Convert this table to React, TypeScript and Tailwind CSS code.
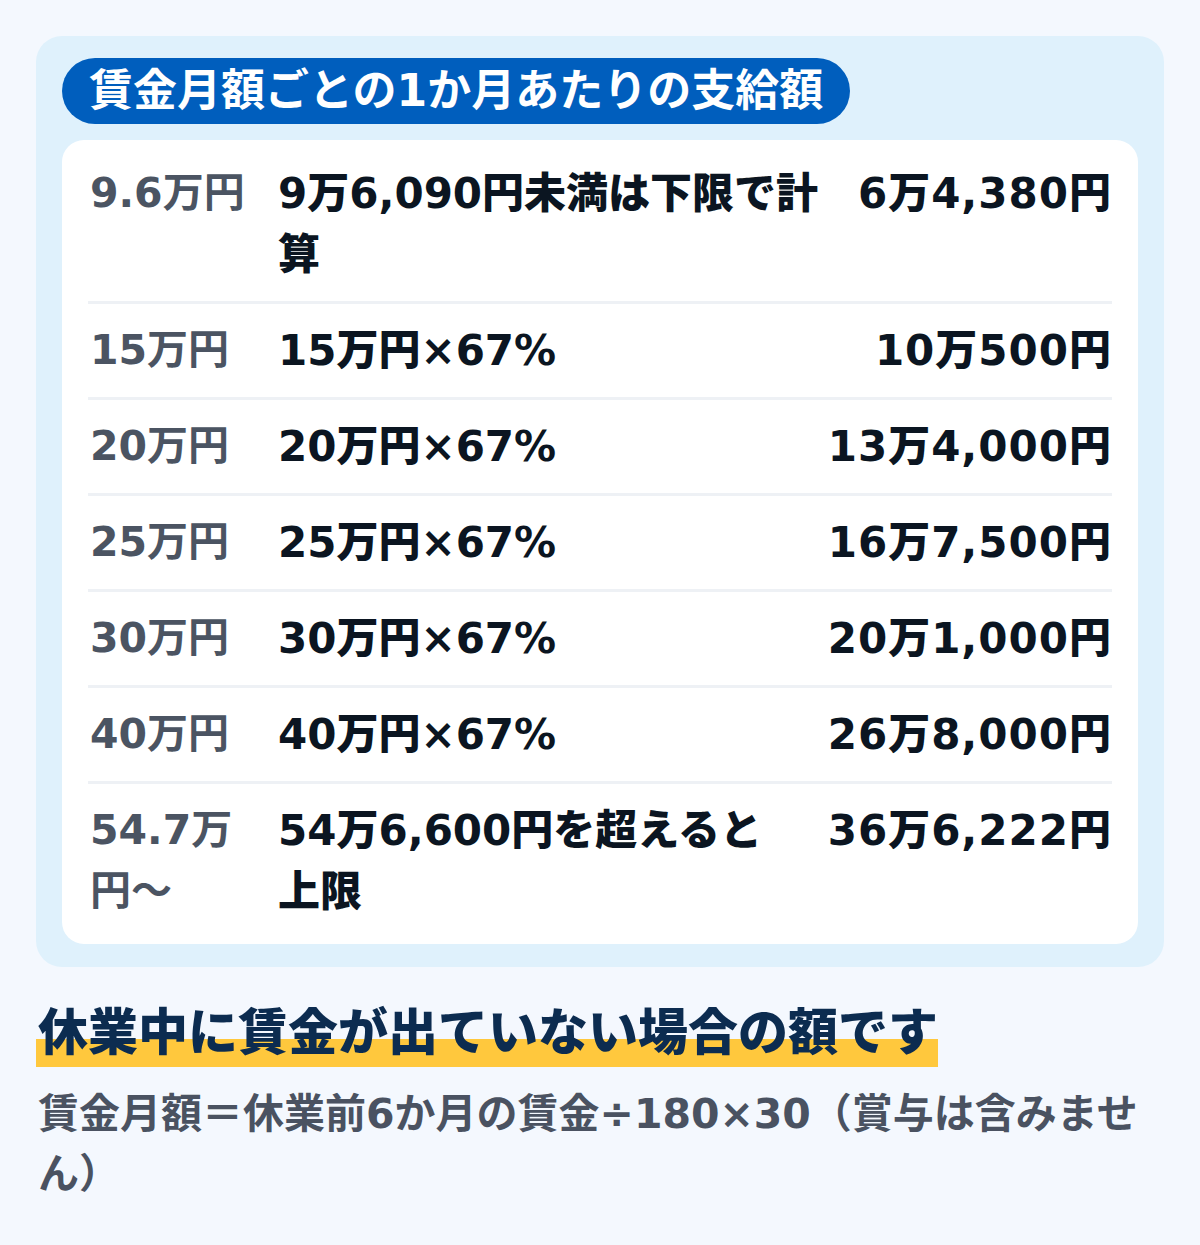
const ROWS = [
  { wage: "9.6万円", calc: "9万6,090円未満は下限で計算", pay: "6万4,380円" },
  { wage: "15万円", calc: "15万円×67%", pay: "10万500円" },
  { wage: "20万円", calc: "20万円×67%", pay: "13万4,000円" },
  { wage: "25万円", calc: "25万円×67%", pay: "16万7,500円" },
  { wage: "30万円", calc: "30万円×67%", pay: "20万1,000円" },
  { wage: "40万円", calc: "40万円×67%", pay: "26万8,000円" },
  { wage: "54.7万円〜", calc: "54万6,600円を超えると上限", pay: "36万6,222円" },
];

export default function App() {
  return (
    <div className="min-h-screen bg-[#f4f8fe] px-[36px] pt-[36px] pb-10 font-['DejaVu_Sans','Noto_Sans_CJK_JP',sans-serif]">
      <section className="rounded-[26px] bg-[#dff1fc] px-[26px] pt-[22px] pb-[23px]">
        <div className="inline-flex h-[66px] items-center rounded-full bg-[#005ebd] px-[27px]">
          <h1 className="text-[44px] font-bold leading-none text-white">
            賃金月額ごとの1か月あたりの支給額
          </h1>
        </div>

        <div className="mt-4 rounded-[22px] bg-white px-[26px] pt-[7px] pb-[6px]">
          {ROWS.map((r, i) => (
            <div
              key={r.wage}
              className={
                "flex items-start py-4 text-[42px] leading-[61px] " +
                (i < ROWS.length - 1 ? "border-b-[3px] border-[#eef1f5]" : "")
              }
            >
              <div className="w-[170px] shrink-0 pl-[2px] text-[41px] font-semibold text-[#4b5462]">{r.wage}</div>
              <div className="ml-[20px] min-w-0 flex-1 font-extrabold text-[#0b1521]">{r.calc}</div>
              <div className="ml-[36px] shrink-0 whitespace-nowrap text-right font-extrabold tracking-[1px] text-[#0b1521]">
                {r.pay}
              </div>
            </div>
          ))}
        </div>
      </section>

      <h2 className="mt-[32px] inline-block bg-[linear-gradient(transparent_59%,#ffc83d_59%)] pl-[2px] text-[50px] font-extrabold leading-[68px] text-[#0c2c50]">
        休業中に賃金が出ていない場合の額です
      </h2>

      <p className="mt-[17px] pl-[2px] text-[41px] font-semibold leading-[60px] text-[#4a5261]">
        賃金月額＝休業前6か月の賃金÷180×30（賞与は含みません）
      </p>
    </div>
  );
}
